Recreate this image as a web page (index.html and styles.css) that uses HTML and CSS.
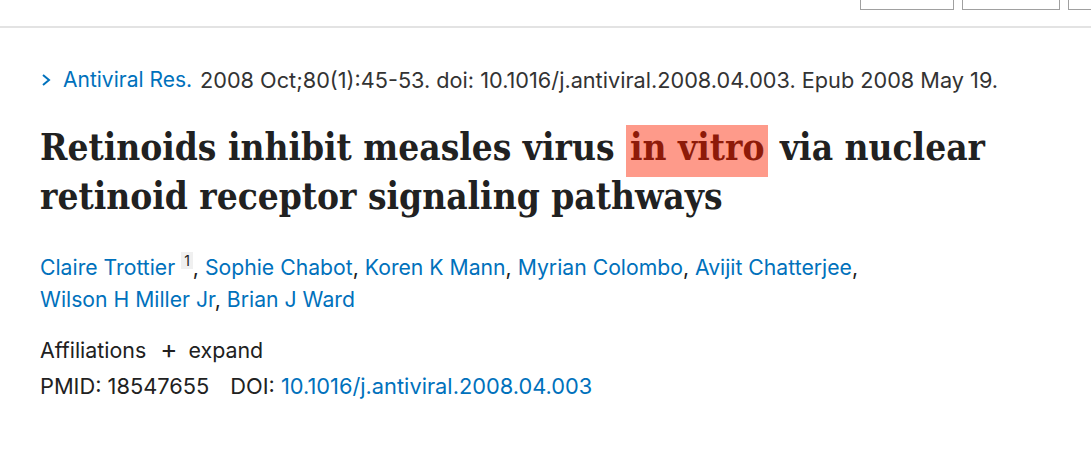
FILE: index.html
```html
<!DOCTYPE html>
<html>
<head>
<meta charset="utf-8">
<link rel="stylesheet" href="styles.css">
</head>
<body>
<header class="topbar">
  <div class="tools">
    <span class="tool-btn b1"></span>
    <span class="tool-btn b2"></span>
    <span class="tool-btn b3"></span>
  </div>
</header>
<main class="article">
  <div class="cit">
    <svg class="chev" width="12" height="14" viewBox="0 0 12 14"><path d="M3 2 L9 7 L3 12" fill="none" stroke="#0071bc" stroke-width="2"/></svg>
    <a class="link journal">Antiviral Res.</a>
    <span class="cit-text">2008 Oct;80(1):45-53. doi: 10.1016/j.antiviral.2008.04.003. Epub 2008 May 19.</span>
  </div>
  <h1 class="title">Retinoids inhibit measles virus <span class="hl">in vitro</span> via nuclear retinoid receptor signaling pathways</h1>
  <div class="authors">
    <a class="link">Claire Trottier</a> <sup class="aff">1</sup>, <a class="link">Sophie Chabot</a>, <a class="link">Koren K Mann</a>, <a class="link">Myrian Colombo</a>, <a class="link">Avijit Chatterjee</a>,<br>
    <a class="link">Wilson H Miller Jr</a>, <a class="link">Brian J Ward</a>
  </div>
  <div class="affil">Affiliations <span class="plus">+</span> expand</div>
  <div class="ids"><span>PMID: 18547655</span><span class="doi">DOI: <a class="link">10.1016/j.antiviral.2008.04.003</a></span></div>
</main>
</body>
</html>
```
FILE: styles.css
```css
html, body { margin: 0; padding: 0; background: #fff; }
body { font-family: Inter, "Liberation Sans", sans-serif; color: #212121; }
.topbar { height: 26px; border-bottom: 2px solid #e3e3e3; display: flex; justify-content: flex-end; }
.tools { display: flex; gap: 8px; align-items: flex-start; margin-right: -23px; }
.tool-btn { display: block; height: 9px; border: 1px solid #a0a0a0; border-top: none; }
.b1 { width: 92px; }
.b2 { width: 96px; }
.b3 { width: 44px; }
.article { padding: 0 40px; }
.cit { display: flex; align-items: center; margin-top: 39px; font-size: 21px; line-height: 26px; }
.chev { margin-right: 11px; margin-left: 0; }
.link { color: #0071bc; text-decoration: none; }
.journal { margin-right: 8px; }
.cit-text { color: #333; font-size: 21.7px; }
.title { font-family: "DejaVu Serif Condensed", "DejaVu Serif", serif; font-stretch: condensed; font-weight: bold; font-size: 36.7px; line-height: 49px; margin: 30px 0 0; color: #212121; }
.hl { background: #fe9a8a; color: #8e1a09; padding: 1px 4px 8px; }
.authors { margin-top: 24px; font-size: 21.2px; line-height: 32px; }
.aff { font-size: 14px; background: #f0f0f0; padding: 0 3px; vertical-align: 9px; color: #212121; }
.affil { margin-top: 18px; font-size: 21.4px; line-height: 32px; }
.plus { font-size: 26px; margin: 0 5px 0 8px; }
.ids { font-size: 21.8px; line-height: 32px; margin-top: 4px; }
.doi { margin-left: 21px; }
```
